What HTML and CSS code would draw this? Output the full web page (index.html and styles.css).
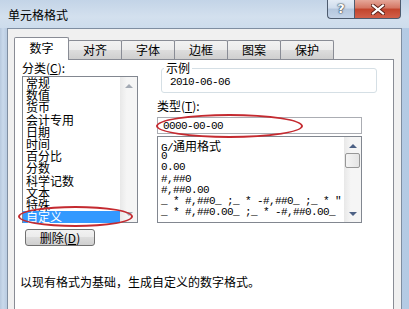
FILE: index.html
```html
<!DOCTYPE html>
<html lang="zh-CN">
<head>
  <meta charset="UTF-8" />
  <title>单元格格式</title>
  <link rel="stylesheet" href="styles.css">
</head>
<body>
  <div class="window">
    <div class="titlebar">
      <span class="title">单元格格式</span>
      <div class="caption">
        <span class="cap-btn help">?</span>
        <span class="cap-btn close">
          <svg width="14" height="11" viewBox="0 0 14 11">
            <path d="M2 1.5 L12 9.5 M12 1.5 L2 9.5" stroke="#5a1f16" stroke-width="4" stroke-linecap="square" />
            <path d="M2 1.5 L12 9.5 M12 1.5 L2 9.5" stroke="#fff" stroke-width="2.2" stroke-linecap="square" />
          </svg>
        </span>
      </div>
    </div>

    <div class="client">
      <div class="tabs">
        <span class="tab active">数字</span>
        <span class="tab">对齐</span>
        <span class="tab">字体</span>
        <span class="tab">边框</span>
        <span class="tab">图案</span>
        <span class="tab">保护</span>
      </div>

      <div class="panel">
        <div class="cols">
          <div class="col-left">
            <div class="label">分类(<u>C</u>):</div>
            <div class="listbox category">
              <ul class="items">
                <li>常规</li>
                <li>数值</li>
                <li>货币</li>
                <li>会计专用</li>
                <li>日期</li>
                <li>时间</li>
                <li>百分比</li>
                <li>分数</li>
                <li>科学记数</li>
                <li>文本</li>
                <li>特殊</li>
                <li class="selected">自定义</li>
              </ul>
              <div class="vscroll disabled">
                <span class="arrow up"></span>
                <span class="arrow down"></span>
              </div>
            </div>
            <button class="btn">删除(<u>D</u>)</button>
          </div>

          <div class="col-right">
            <fieldset class="sample">
              <legend>示例</legend>
              <div class="sample-value mono">2010-06-06</div>
            </fieldset>
            <div class="label type-label">类型(<u>T</u>):</div>
            <div class="textbox mono">0000-00-00</div>
            <div class="listbox formats">
              <ul class="items mono">
                <li>G/<span class="cjk">通用格式</span></li>
                <li>0</li>
                <li>0.00</li>
                <li>#,##0</li>
                <li>#,##0.00</li>
                <li>_ * #,##0_ ;_ * -#,##0_ ;_ * "</li>
                <li>_ * #,##0.00_ ;_ * -#,##0.00_</li>
              </ul>
              <div class="vscroll">
                <span class="arrow up"></span>
                <span class="thumb"></span>
                <span class="arrow down"></span>
              </div>
            </div>
          </div>
        </div>

        <p class="desc">以现有格式为基础，生成自定义的数字格式。</p>
      </div>
    </div>

    <!-- red hand-drawn marks over the dialog -->
    <span class="mark mark-category"></span>
    <span class="mark mark-type"></span>
  </div>
</body>
</html>
```

FILE: styles.css
```css
body {
  margin: 0;
  background: #fff;
}

.window {
  position: relative;
  width: 409px;
  height: 309px;
  overflow: hidden;
  font-family: "Noto Sans CJK SC", sans-serif;
  font-size: 12px;
  line-height: 12px;
  color: #000;
  background: linear-gradient(90deg, #b7c9de 0, #c9d9eb 3px, #bccee3 6px, #c6d7ea 60%, #b3cae4 100%);
}

.mono {
  font-family: "Liberation Mono", monospace;
  font-size: 11px;
  letter-spacing: -0.6px;
}

.cjk {
  font-family: "Noto Sans CJK SC", sans-serif;
  font-size: 12px;
  letter-spacing: 0;
}

/* title bar */
.titlebar {
  height: 28px;
  display: flex;
  justify-content: space-between;
  align-items: flex-start;
  background: linear-gradient(180deg, #c3d4e7 0, #d3e0ee 60%, #cddcec 100%);
}

.title {
  padding: 9px 0 0 8px;
}

.caption {
  display: flex;
  margin-right: 8px;
}

.cap-btn {
  height: 19px;
  box-sizing: border-box;
  display: flex;
  align-items: center;
  justify-content: center;
  border: 1px solid #4d5b6e;
  border-top: none;
}

.help {
  width: 27px;
  border-radius: 0 0 0 4px;
  border-right: none;
  background: linear-gradient(180deg, #e3ebf5 0, #cfdcec 45%, #b4c6dd 50%, #c4d4e8 100%);
  color: #fff;
  font-family: "DejaVu Sans", sans-serif;
  font-weight: bold;
  font-size: 13px;
  text-shadow: 0 0 1px #33404f, 0 0 1px #33404f, 0 0 2px #33404f;
}

.close {
  width: 47px;
  border-radius: 0 0 4px 0;
  background: linear-gradient(180deg, #e5a799 0, #d47562 45%, #c2442c 50%, #d2604a 100%);
}

/* dialog client area */
.client {
  margin: 0 7px;
  height: 290px;
  border: 1px solid #7f8ea1;
  border-bottom: none;
  background: #f0f0f0;
  padding: 8px 0 0 6px;
}

.tabs {
  display: flex;
  align-items: flex-end;
  height: 22px;
  position: relative;
  z-index: 1;
}

.tab {
  width: 54px;
  height: 19px;
  box-sizing: border-box;
  margin-left: -1px;
  display: flex;
  align-items: center;
  justify-content: center;
  border: 1px solid #898c95;
  border-bottom: none;
  border-radius: 2px 2px 0 0;
  background: linear-gradient(180deg, #f2f2f2 0, #ebebeb 50%, #dddddd 50%, #cfcfcf 100%);
}

.tab.active {
  width: 55px;
  height: 23px;
  margin-left: 0;
  margin-bottom: -1px;
  padding-bottom: 3px;
  background: #fff;
}

.panel {
  width: 380px;
  height: 270px;
  box-sizing: border-box;
  border: 1px solid #898c95;
  background: #fff;
  padding: 2px 0 0 7px;
}

.cols {
  display: flex;
  gap: 19px;
}

.col-left {
  width: 116px;
  display: flex;
  flex-direction: column;
  align-items: flex-start;
}

.col-right {
  width: 205px;
}

.label {
  height: 12px;
}

.listbox {
  display: flex;
  box-sizing: border-box;
  border: 1px solid #828790;
  background: #fff;
}

.items {
  list-style: none;
  margin: 0;
  padding: 0;
  flex: 1;
  min-width: 0;
}

.category {
  width: 116px;
  height: 147px;
  margin-top: 2px;
}

.category .items li {
  height: 12.2px;
  line-height: 12.2px;
  padding-left: 3px;
}

.category .items li.selected {
  background: #3399ff;
  color: #fff;
}

.vscroll {
  width: 17px;
  flex: none;
  display: flex;
  flex-direction: column;
  align-items: center;
  background: linear-gradient(90deg, #e8e8e8, #f5f5f5 40%, #f5f5f5);
}

.arrow {
  width: 0;
  height: 0;
  border-left: 4px solid transparent;
  border-right: 4px solid transparent;
}

.arrow.up {
  margin-top: 7px;
  border-bottom: 4px solid #4d6185;
}

.arrow.down {
  margin-top: auto;
  margin-bottom: 6px;
  border-top: 4px solid #4d6185;
}

.vscroll.disabled .arrow.up {
  border-bottom-color: #a3aab4;
}

.vscroll.disabled .arrow.down {
  border-top-color: #a3aab4;
}

.thumb {
  width: 15px;
  height: 15px;
  margin-top: 5px;
  box-sizing: border-box;
  border: 1px solid #979797;
  border-radius: 2px;
  background: linear-gradient(90deg, #f4f4f4, #e4e4e4);
}

.btn {
  margin: 6px 0 0 3px;
  width: 70px;
  height: 17px;
  padding: 0;
  font: inherit;
  border: 1px solid #707070;
  border-radius: 3px;
  background: linear-gradient(180deg, #f2f2f2 0, #ebebeb 50%, #dddddd 50%, #cfcfcf 100%);
}

/* right column */
.sample {
  margin: 0 0 0 4px;
  width: 216px;
  box-sizing: border-box;
  padding: 2px 0 4px 2px;
  border: 1px solid #d5dfe5;
  border-radius: 3px;
}

.sample legend {
  padding: 0 2px;
  line-height: 12px;
}

.sample-value {
  margin-left: 6px;
  line-height: 12px;
}

.type-label {
  margin-top: 7px;
}

.textbox {
  margin-top: 5px;
  height: 17px;
  box-sizing: border-box;
  border: 1px solid #abadb3;
  padding: 2px 0 0 5px;
  line-height: 12px;
}

.formats {
  margin-top: 2px;
  height: 87px;
}

.formats .items {
  padding: 3px 0 0 3px;
  overflow: hidden;
}

.formats .items li {
  height: 11.2px;
  line-height: 11.2px;
  white-space: pre;
}

.desc {
  margin: 30px 0 0 -2px;
}

/* red annotation ellipses */
.mark {
  position: absolute;
  border: 2px solid #c42a30;
  border-radius: 50%;
}

.mark-category {
  left: 18px;
  top: 206px;
  width: 111px;
  height: 17px;
}

.mark-type {
  left: 156px;
  top: 114px;
  width: 143px;
  height: 20px;
}
```
